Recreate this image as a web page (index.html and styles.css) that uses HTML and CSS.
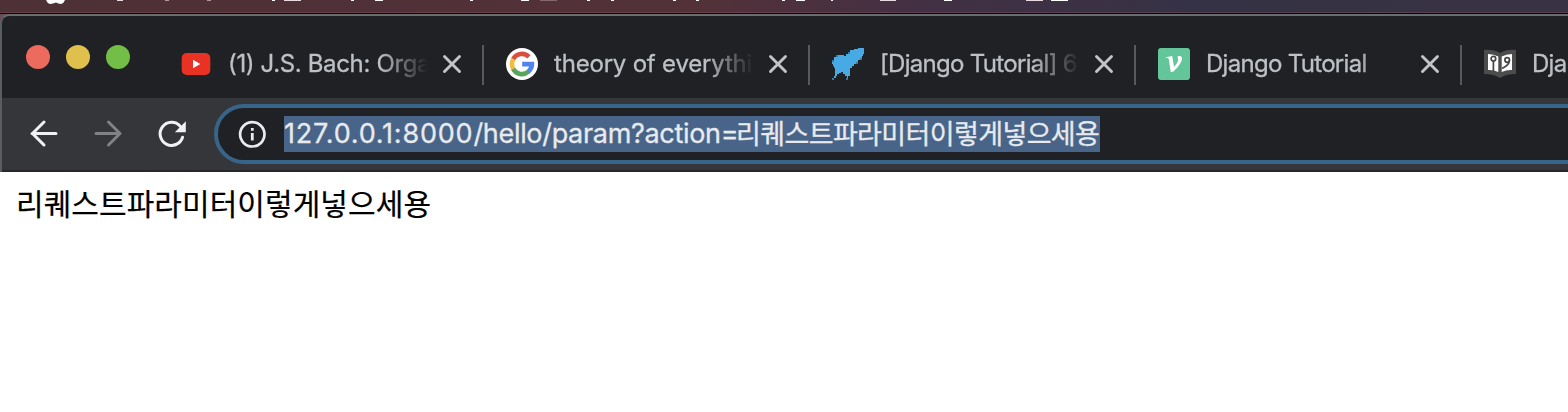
FILE: index.html
```html
<!DOCTYPE html>
<html lang="ko">
<head>
<meta charset="utf-8">
<title>127.0.0.1:8000/hello/param</title>
<link rel="stylesheet" href="styles.css">
</head>
<body>
<div class="menubar">
  <svg width="1568" height="12" viewBox="0 0 1568 12" aria-hidden="true">
    <path fill="#fff" d="M46 0H65Q64 3 61 4Q58 4 56 2.6Q53 4 50 4Q47 3 46 0Z"/>
    <path fill="#e8dade" d="M117 0h6v1h-6zM284 0h17v1h-17zM880 0h16v1h-16zM1026 0h17v1h-17z"/>
    <path fill="#b09aa0" d="M165 0h4v1h-4zM207 0h4v1h-4z"/>
    <path fill="#85686e" d="M540 0h17v1h-17z"/>
    <path fill="#fff" d="M272 0h3v1h-3zM351 0h3v1h-3zM375 0h8v1h-8zM470 0h3v1h-3zM521 0h8v1h-8zM587 0h3v1h-3zM611 0h3v1h-3zM673 0h3v1h-3zM696 0h3v1h-3zM782 0h3v1h-3zM796 0h9v1h-9zM831 0h2v1h-2zM944 0h8v1h-8zM1051 0h17v1h-17z"/>
  </svg>
</div>
<div class="desktop">
<div class="window">
  <div class="tabstrip">
    <div class="lights"><i class="light red"></i><i class="light yellow"></i><i class="light green"></i></div>
    <div class="tab">
      <svg class="favicon" viewBox="0 0 32 32"><rect x="1.7" y="5" width="28.6" height="22" rx="5" fill="#e93223"/><path fill="#fff" d="M13 11.8L20.3 16L13 20.2Z"/></svg>
      <span class="title t1">(1) J.S. Bach: Orga</span>
      <svg class="close" viewBox="0 0 20 20"><path d="M2.5 2.5L17.5 17.5M17.5 2.5L2.5 17.5"/></svg>
    </div>
    <div class="tab">
      <svg class="favicon" viewBox="0 0 32 32"><circle cx="16" cy="16" r="16" fill="#fff"/><g fill="none" stroke-width="4.6"><path stroke="#d95040" d="M7.1 11.2A10 10 0 0 1 22.9 8.8"/><path stroke="#f2bd42" d="M7.3 20.9A10 10 0 0 1 7.3 11.1"/><path stroke="#58a55c" d="M22.5 23.6A10 10 0 0 1 7.1 20.8"/><path stroke="#5383ec" d="M16.2 16.1H25.9A10 10 0 0 1 22.3 23.8"/></g></svg>
      <span class="title t2">theory of everythin</span>
      <svg class="close" viewBox="0 0 20 20"><path d="M2.5 2.5L17.5 17.5M17.5 2.5L2.5 17.5"/></svg>
    </div>
    <div class="tab">
      <svg class="favicon" viewBox="0 0 32 32" shape-rendering="crispEdges"><path fill="#48aae5" d="M26 0H32V6H31V8H30V10H28V12H26V14H24V16H22V18H20V20H18V28H16V31H15V28H13V26H11V24H9V25H7V26H5V28H4V30H2V32H0V30H2V28H3V20H2V18H1V16H0V13H2V9H4V8H6V7H12V8H14V6H16V4H18V2H22V1H26Z"/><path fill="#347aa2" d="M0 12h2v2H0zM4 7h2v2H4zM0 30h2v2H0zM14 30h2v2h-2zM28 10h2v2h-2zM24 14h2v2h-2zM16 4h2v2h-2z"/></svg>
      <span class="title t3">[Django Tutorial] 6</span>
      <svg class="close" viewBox="0 0 20 20"><path d="M2.5 2.5L17.5 17.5M17.5 2.5L2.5 17.5"/></svg>
    </div>
    <div class="tab">
      <svg class="favicon" viewBox="0 0 32 32"><rect width="32" height="32" rx="3" fill="#63c69b"/><path fill="#fff" d="M8 9.2L14.2 8L16.1 19C18.5 16 20.2 13.4 20.2 11.5C20.2 10.5 19.5 10 19.5 9.2C19.5 8.4 20.4 7.9 21.6 7.9C23.2 7.9 24 8.8 24 10.4C24 14.6 18.2 21.1 14.8 24H12.7L10.9 11.5C10.7 10.2 10.3 10 9 10H8Z"/></svg>
      <span class="title t4">Django Tutorial</span>
      <svg class="close" viewBox="0 0 20 20"><path d="M2.5 2.5L17.5 17.5M17.5 2.5L2.5 17.5"/></svg>
    </div>
    <div class="tab">
      <svg class="favicon" viewBox="0 0 32 32"><path fill="#4c4c4c" d="M0 2Q9 1 16 5Q23 1 32 2V26Q22 26 16 30Q10 26 0 26Z"/><path fill="#fff" d="M4 6Q10 6 14.3 8.5V24Q9 21.5 4 22ZM28 6Q22 6 17.7 8.5V24Q23 21.5 28 22Z"/><g fill="none" stroke="#444" stroke-width="1.7"><circle cx="9.4" cy="10.7" r="2.3"/><path d="M9.4 13V23"/><circle cx="23.2" cy="12" r="2.3"/><path d="M25.3 12.5Q25.5 17 18 20.5"/></g></svg>
      <span class="title t4">Dja</span>
    </div>
  </div>
  <div class="toolbar">
    <svg class="nav" viewBox="0 0 32 32"><path stroke="#eff1f3" d="M28 15.5H4M16 4L4.5 15.5L16 27"/></svg>
    <svg class="nav" viewBox="0 0 32 32"><path stroke="#818284" d="M4 15.5H28M16.5 4L28 15.5L16.5 27"/></svg>
    <svg class="nav" viewBox="0 0 32 32"><path stroke="#eff1f3" d="M26.6 19.3A11.5 11.5 0 1 1 24.2 8.2"/><path fill="#eff1f3" d="M29.8 3.2V14.2H18.8Z"/></svg>
    <div class="omnibox">
      <svg class="info" viewBox="0 0 28 28"><circle cx="14.3" cy="14.3" r="12.2" fill="none" stroke="#e9eaed" stroke-width="2.7"/><path fill="#e9eaed" d="M12.9 8h2.8v2.8h-2.8zM12.9 13h2.8v7.6h-2.8z"/></svg>
      <div class="url"><span class="latin"><span class="host">127.0.0.1:8000</span>/hello/param?action=</span><span class="hangul">리퀘스트파라미터이렇게넣으세용</span></div>
    </div>
  </div>
</div>
</div>
<main class="page">리퀘스트파라미터이렇게넣으세용</main>
</body>
</html>
```
FILE: styles.css
```css
* { box-sizing: border-box; }
body { margin: 0; width: 1568px; height: 412px; overflow: hidden; background: #fff; font-family: Inter, "Noto Sans CJK KR", sans-serif; }
svg { display: block; flex: none; }
.menubar { height: 14px; border-bottom: 1px solid #05040a; background: linear-gradient(90deg, #4e3037 0, #533139 700px, #433044 920px, #353245 1200px, #383244 1568px); }
.menubar svg { box-sizing: content-box; border-bottom: 1px solid rgba(160, 100, 115, 0.3); }
.desktop { background: #6b4a5c; }
.window { height: 158px; border: 2px solid #5a5d60; border-top-color: #6a6d6f; border-right: 0; border-bottom: 0; border-radius: 9px 0 0 0; background: #202124; overflow: hidden; }
.tabstrip { display: flex; height: 82px; }
.lights { display: flex; gap: 16px; width: 156px; flex: none; padding: 29px 0 0 24px; }
.light { width: 24px; height: 24px; border-radius: 50%; }
.red { background: #ed6a5e; }
.yellow { background: #e0c04c; }
.green { background: #72be47; }
.tab { display: flex; flex: none; align-items: center; width: 326px; height: 40px; margin-top: 29px; padding: 0 20px 2px 22px; border-right: 2px solid #58595c; }
.favicon { width: 32px; height: 32px; }
.title { flex: none; width: 200px; height: 36px; margin: 0 14px 0 16px; color: #bdc1c6; font-size: 24px; -webkit-text-stroke: 0.3px #bdc1c6; line-height: 36px; white-space: nowrap; -webkit-mask-image: linear-gradient(90deg, #000 76%, transparent 100%); mask-image: linear-gradient(90deg, #000 76%, transparent 100%); }
.close { width: 20px; height: 20px; fill: none; stroke: #c2c4c8; stroke-width: 2.9; stroke-linecap: round; }
.t1 { letter-spacing: -0.35px; }
.t2 { letter-spacing: -0.2px; }
.t3, .t4 { letter-spacing: -0.7px; }
.toolbar { display: flex; align-items: center; height: 74px; padding-left: 26px; background: #35363a; border-bottom: 2px solid #27282b; }
.nav { width: 32px; height: 32px; margin-right: 32px; fill: none; stroke-width: 3; stroke-linecap: round; stroke-linejoin: round; }
.nav:nth-child(3) { margin-right: 26px; }
.omnibox { display: flex; align-items: center; flex: none; width: 1500px; height: 60px; padding-left: 20px; border: 4px solid #386489; border-radius: 30px; background: #202124; }
.info { width: 28px; height: 28px; margin-right: 18px; }
.url { display: flex; width: 816px; height: 36px; background: #486488; color: #e8eaed; font-size: 27px; -webkit-text-stroke: 0.3px #e8eaed; line-height: 36px; white-space: nowrap; }
.latin { width: 452px; flex: none; letter-spacing: -0.32px; }
.host { letter-spacing: 0.8px; }
.hangul { font-family: "Noto Sans CJK KR", sans-serif; font-size: 27px; letter-spacing: -0.62px; line-height: 34px; }
.page { padding: 8px 16px; font-family: "Noto Sans CJK KR", sans-serif; font-size: 30px; -webkit-text-stroke: 0.2px #000; letter-spacing: 0.07px; line-height: 44px; color: #000; white-space: nowrap; }
```
